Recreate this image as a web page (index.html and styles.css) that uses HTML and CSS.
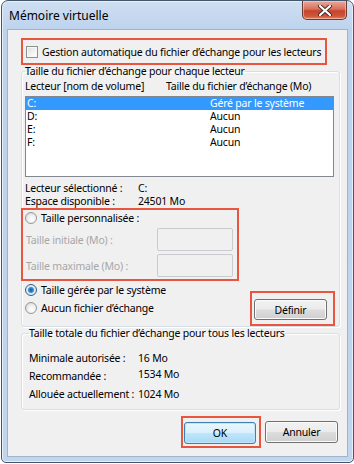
FILE: index.html
```html
<!DOCTYPE html>
<html lang="fr">
<head>
    <meta charset="UTF-8">
    <meta name="viewport" content="width=device-width, initial-scale=1.0">
    <title>Mémoire virtuelle</title>
    <link rel="stylesheet" href="styles.css">
</head>
<body>
    <div class="window">
        <div class="titlebar">
            <span class="title">Mémoire virtuelle</span>
            <button class="close-btn" type="button" aria-label="Fermer">
                <svg width="14" height="11" viewBox="0 0 14 11">
                    <path d="M2 1 L12 10 M12 1 L2 10" stroke="#3b2a28" stroke-width="4" stroke-linecap="round"/>
                    <path d="M2 1 L12 10 M12 1 L2 10" stroke="#ffffff" stroke-width="2.2" stroke-linecap="round"/>
                </svg>
            </button>
        </div>
        <div class="client">
            <div class="mark mark-auto">
                <label class="check">
                    <span class="checkbox"></span>
                    Gestion automatique du fichier d’échange pour les lecteurs
                </label>
            </div>

            <fieldset class="group group-drives">
                <legend>Taille du fichier d’échange pour chaque lecteur</legend>
                <div class="list-head">
                    <span>Lecteur [nom de volume]</span>
                    <span>Taille du fichier d’échange (Mo)</span>
                </div>
                <div class="listbox">
                    <div class="list-row selected"><span>C:</span><span>Géré par le système</span></div>
                    <div class="list-row"><span>D:</span><span>Aucun</span></div>
                    <div class="list-row"><span>E:</span><span>Aucun</span></div>
                    <div class="list-row"><span>F:</span><span>Aucun</span></div>
                </div>
                <div class="info">
                    <span>Lecteur sélectionné :</span><span>C:</span>
                    <span>Espace disponible :</span><span>24501 Mo</span>
                </div>
                <div class="mark mark-custom">
                    <label class="radio-row">
                        <span class="radio"></span>
                        Taille personnalisée :
                    </label>
                    <div class="field-row">
                        <span class="disabled-text">Taille initiale (Mo) :</span>
                        <span class="textbox"></span>
                    </div>
                    <div class="field-row">
                        <span class="disabled-text">Taille maximale (Mo) :</span>
                        <span class="textbox"></span>
                    </div>
                </div>
                <div class="options">
                    <div class="radios">
                        <label class="radio-row option">
                            <span class="radio checked"></span>
                            Taille gérée par le système
                        </label>
                        <label class="radio-row option">
                            <span class="radio"></span>
                            Aucun fichier d’échange
                        </label>
                    </div>
                    <div class="mark mark-define">
                        <button class="btn define-btn" type="button">Définir</button>
                    </div>
                </div>
            </fieldset>

            <fieldset class="group group-totals">
                <legend>Taille totale du fichier d’échange pour tous les lecteurs</legend>
                <div class="totals">
                    <span>Minimale autorisée :</span><span>16 Mo</span>
                    <span>Recommandée :</span><span class="nudge">1534 Mo</span>
                    <span>Allouée actuellement :</span><span>1024 Mo</span>
                </div>
            </fieldset>

            <div class="actions">
                <div class="mark mark-ok">
                    <button class="btn btn-default" type="button">OK</button>
                </div>
                <button class="btn" type="button">Annuler</button>
            </div>
        </div>
    </div>
</body>
</html>
```

FILE: styles.css
```css
:root {
    --mark-color: #e8563f;
}
body {
    margin: 0;
    background: #ffffff;
    font-family: "Noto Sans", "Liberation Sans", sans-serif;
    font-size: 10.5px;
    letter-spacing: -0.2px;
    color: #000000;
    white-space: nowrap;
}
.window {
    box-sizing: border-box;
    width: 353px;
    height: 463px;
    margin-left: 1px;
    border: 1px solid #44566c;
    border-radius: 7px 7px 5px 5px;
    background: linear-gradient(180deg, #cfdff2 0px, #bcd2ed 30px, #c0d5ee 100%);
    box-shadow: inset 0 0 0 1px #e6eff9;
    display: flex;
    flex-direction: column;
}
.titlebar {
    height: 28px;
    display: flex;
    align-items: flex-start;
    justify-content: space-between;
}
.title {
    padding: 7px 0 0 7px;
    font-size: 12px;
    letter-spacing: 0;
    line-height: 15px;
}
.close-btn {
    width: 45px;
    height: 19px;
    margin: 0 6px 0 0;
    padding: 0;
    border: 1px solid #6d3a33;
    border-top: none;
    border-radius: 0 0 5px 5px;
    background: linear-gradient(180deg, #e9a99c 0%, #d8705c 45%, #c7432b 55%, #d0563c 85%, #e08a6c 100%);
    box-shadow: inset 0 0 0 1px rgba(255, 220, 210, 0.5);
    display: flex;
    align-items: center;
    justify-content: center;
}
.client {
    flex: 1;
    margin: 0 5px 5px 5px;
    border: 1px solid #9fb3cb;
    background: #f0f0f0;
    display: flex;
    flex-direction: column;
}
.mark {
    box-sizing: border-box;
    border: 2px solid var(--mark-color);
}
.mark-auto {
    width: 306px;
    height: 27px;
    margin: 8px 0 0 13px;
    padding-left: 3px;
    display: flex;
    align-items: center;
}
.check, .radio-row {
    display: flex;
    align-items: center;
    gap: 4px;
}
.checkbox {
    box-sizing: border-box;
    width: 12px;
    height: 12px;
    border: 1px solid #8e8f8f;
    background: linear-gradient(135deg, #dcdcdc 0%, #f4f4f4 60%, #ffffff 100%);
    box-shadow: inset 0 0 0 1px #f7f7f7;
}
.radio {
    box-sizing: border-box;
    width: 12px;
    height: 12px;
    border: 1px solid #979797;
    border-radius: 50%;
    background: radial-gradient(circle at 60% 65%, #ffffff 0%, #f0f0f0 45%, #cfcfcf 100%);
}
.radio.checked {
    border-color: #2c628b;
    background: radial-gradient(circle at 50% 50%, #1d5b92 0px, #3a8fd4 2.5px, #dbe6ef 3.5px, #e6eef4 100%);
}
.group {
    margin: 0 0 0 13px;
    width: 319px;
    box-sizing: border-box;
    border: 1px solid #d5dfe5;
    border-radius: 3px;
    box-shadow: inset 1px 1px 0 #ffffff, 1px 1px 0 #ffffff;
}
.group legend {
    padding: 0;
    line-height: 13px;
}
.group-drives {
    padding: 0 5px 0 3px;
}
.list-head {
    display: grid;
    grid-template-columns: 141px 1fr;
    line-height: 16px;
    margin-bottom: 2px;
}
.listbox {
    box-sizing: border-box;
    height: 81px;
    border: 1px solid #828790;
    background: #ffffff;
}
.list-row {
    display: grid;
    grid-template-columns: 183px 1fr;
    height: 13px;
    line-height: 13px;
    padding-left: 1px;
}
.list-row.selected {
    background: #3399ff;
    color: #ffffff;
}
.info {
    margin-top: 5px;
    display: grid;
    grid-template-columns: 113px 1fr;
    line-height: 13px;
}
.mark-custom {
    width: 218px;
    height: 73px;
    margin-left: -4px;
    padding: 1px 0 0 2px;
}
.mark-custom .radio-row {
    height: 14px;
}
.field-row {
    display: flex;
    align-items: center;
    margin-top: 3px;
    padding-left: 1px;
}
.disabled-text {
    width: 131px;
    color: #a7a7a7;
}
.textbox {
    box-sizing: border-box;
    width: 76px;
    height: 23px;
    border: 1px solid #c9cbce;
    border-radius: 2px;
    background: #f0f0f0;
}
.options {
    display: flex;
    justify-content: space-between;
    align-items: flex-start;
    margin-right: -1px;
}
.radios {
    display: flex;
    flex-direction: column;
}
.option {
    height: 18px;
}
.mark-define {
    width: 85px;
    height: 35px;
    margin-top: 10px;
    padding: 6px 0 0 2px;
}
.btn {
    box-sizing: border-box;
    width: 73px;
    height: 22px;
    padding: 0;
    border: 1px solid #707070;
    border-radius: 3px;
    background: linear-gradient(180deg, #f2f2f2 0%, #ebebeb 48%, #dddddd 52%, #cfcfcf 100%);
    box-shadow: inset 0 0 0 1px #fbfbfb;
    font-family: inherit;
    font-size: 10.5px;
    letter-spacing: -0.2px;
    color: #000000;
}
.define-btn {
    height: 21px;
}
.group-totals {
    padding: 0 5px 6px 7px;
}
.totals {
    padding-top: 9px;
    display: grid;
    grid-template-columns: 109px 1fr;
    grid-auto-rows: 18px;
    align-items: center;
}
.nudge {
    margin-top: -5px;
}
.actions {
    margin-top: 6px;
    padding-right: 9px;
    display: flex;
    justify-content: flex-end;
    align-items: center;
    gap: 4px;
}
.mark-ok {
    width: 80px;
    height: 32px;
    padding: 4px 0 0 1px;
}
.btn-default {
    width: 72px;
    border-color: #3c7fb1;
    background: linear-gradient(180deg, #eaf6fd 0%, #d9f0fc 48%, #bee6fd 52%, #a7d9f5 100%);
    box-shadow: inset 0 0 0 1px #c6e4f8;
}
.actions > .btn {
    width: 73px;
}
```
